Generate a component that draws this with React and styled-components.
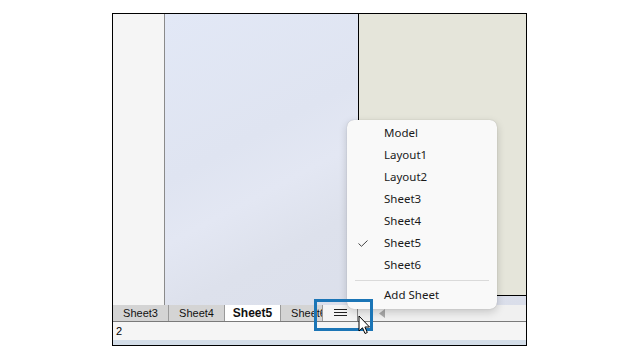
import React from "react";
import styled, { createGlobalStyle } from "styled-components";

const Global = createGlobalStyle`
  html, body { margin: 0; padding: 0; background: #ffffff; }
  body { width: 640px; height: 360px; overflow: hidden; position: relative; }
`;

const Stage = styled.div`
  position: relative;
  width: 640px;
  height: 360px;
  padding: 13px 0 0 112px;
  box-sizing: border-box;
`;

const Frame = styled.div`
  width: 415px;
  height: 333px;
  box-sizing: border-box;
  border: 1px solid #000;
  display: flex;
  flex-direction: column;
  background: #f0f0f0;
`;

const Workspace = styled.div`
  height: 291px;
  display: flex;
`;

const Gutter = styled.div`
  width: 51px;
  background: #f5f5f5;
  border-right: 1px solid #8a8a8a;
`;

const Paper = styled.div`
  flex: 1;
  display: flex;
  flex-direction: column;
  background: linear-gradient(152deg, #e2e8f6 0%, #dfe4f1 35%, #e3e7f3 48%, #dde1ec 62%, #dadeea 100%);
`;

const PaperTop = styled.div`
  height: 282px;
  display: flex;
`;

const Spacer = styled.div`
  flex: 1;
`;

const Viewport = styled.div`
  width: 167px;
  background: #e5e5da;
  border-left: 1px solid #000;
  border-bottom: 1px solid #000;
  box-sizing: content-box;
  height: 281px;
`;

const TabBar = styled.div`
  height: 16px;
  border-bottom: 1px solid #7a7a7a;
  background: #f0f0f0;
  display: flex;
  align-items: stretch;
  font-family: "Liberation Sans", Arial, sans-serif;
  font-size: 11px;
  color: #111;
`;

const TabList = styled.div`
  width: 209px;
  display: flex;
  overflow: hidden;
`;

const Tab = styled.div`
  flex: 0 0 55px;
  border-right: 1px solid #9a9a9a;
  background: ${(p) => (p.$active ? "#ffffff" : "#d4d4d4")};
  font-weight: ${(p) => (p.$active ? 700 : 400)};
  font-size: ${(p) => (p.$active ? "12px" : "11px")};
  line-height: 16px;
  text-align: center;
  white-space: nowrap;
`;

const MenuButton = styled.div`
  width: 34px;
  border-left: 1px solid #9a9a9a;
  border-right: 1px solid #8a8a8a;
  background: #f4f4f4;
  display: flex;
  align-items: center;
  justify-content: center;
`;

const ScrollArea = styled.div`
  flex: 1;
  display: flex;
  align-items: center;
  padding-left: 21px;
`;

const StatusBar = styled.div`
  height: 18px;
  background: #f5f5f5;
  font-family: "Liberation Sans", Arial, sans-serif;
  font-size: 11px;
  line-height: 18px;
  color: #000;
  padding-left: 3px;
`;

const BottomStrip = styled.div`
  height: 5px;
  background: #d3dde8;
`;

const Menu = styled.div`
  position: absolute;
  left: 347px;
  top: 120px;
  width: 150px;
  height: 189px;
  box-sizing: border-box;
  padding-top: 2px;
  background: #f9f9f9;
  border-radius: 7px;
  box-shadow: 0 3px 9px rgba(0, 0, 0, 0.18), 0 0 1px rgba(0, 0, 0, 0.25);
  font-family: "Noto Sans", "Segoe UI", sans-serif;
  font-size: 11.5px;
  color: #1a1a1a;
`;

const Item = styled.div`
  position: relative;
  height: 22px;
  line-height: 22px;
  padding-left: 37px;
`;

const Check = styled.svg`
  position: absolute;
  left: 11px;
  top: 8px;
`;

const Separator = styled.div`
  height: 1px;
  margin: 4px 8px 3px 8px;
  background: #dadada;
`;

const Highlight = styled.div`
  position: absolute;
  left: 314px;
  top: 299px;
  width: 59px;
  height: 32px;
  box-sizing: border-box;
  border: 3px solid #1b75b6;
`;

const Cursor = styled.svg`
  position: absolute;
  left: 358px;
  top: 315px;
`;

const menuItems = ["Model", "Layout1", "Layout2", "Sheet3", "Sheet4", "Sheet5", "Sheet6"];

export default function App() {
  return (
    <>
      <Global />
      <Stage>
        <Frame>
          <Workspace>
            <Gutter />
            <Paper>
              <PaperTop>
                <Spacer />
                <Viewport />
              </PaperTop>
            </Paper>
          </Workspace>
          <TabBar>
            <TabList>
              <Tab>Sheet3</Tab>
              <Tab>Sheet4</Tab>
              <Tab $active>Sheet5</Tab>
              <Tab>Sheet6</Tab>
            </TabList>
            <MenuButton>
              <svg width="13" height="8" viewBox="0 0 13 8">
                <path d="M0 0.5H13M0 3.5H13M0 6.5H13" stroke="#222" strokeWidth="1" />
              </svg>
            </MenuButton>
            <ScrollArea>
              <svg width="6" height="9" viewBox="0 0 6 9">
                <path d="M6 0L0 4.5L6 9Z" fill="#a8a8a8" />
              </svg>
            </ScrollArea>
          </TabBar>
          <StatusBar>2</StatusBar>
          <BottomStrip />
        </Frame>

        <Menu>
          {menuItems.map((m) => (
            <Item key={m}>
              {m === "Sheet5" && (
                <Check width="10" height="7" viewBox="0 0 10 7">
                  <path d="M0.5 3.5L3.5 6.3L9.5 0.5" fill="none" stroke="#444" strokeWidth="1" />
                </Check>
              )}
              {m}
            </Item>
          ))}
          <Separator />
          <Item>Add Sheet</Item>
        </Menu>

        <Highlight />

        <Cursor width="14" height="22" viewBox="0 0 14 22">
          <path
            d="M1 1L1 16L4.5 12.8L7 18.5L9.3 17.5L6.9 12L11.5 12Z"
            fill="#fff"
            stroke="#000"
            strokeWidth="1"
            strokeLinejoin="miter"
          />
        </Cursor>
      </Stage>
    </>
  );
}
